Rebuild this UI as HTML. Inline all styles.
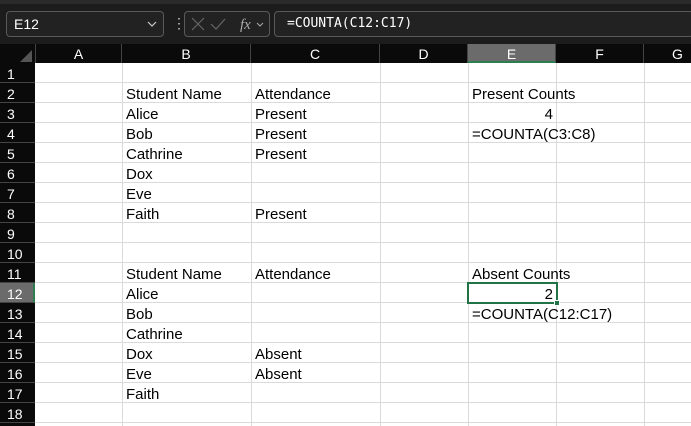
<!DOCTYPE html><html><head><style>
*{margin:0;padding:0;box-sizing:border-box}
body{width:691px;height:426px;overflow:hidden;background:#fff;font-family:"Liberation Sans",sans-serif;position:relative}
.a{position:absolute}
.t{position:absolute;font-size:15px;color:#000;line-height:20px;white-space:nowrap;margin-top:2px}
.ch{position:absolute;top:44px;height:19px;color:#fff;font-size:14px;text-align:center;line-height:21px;border-right:1px solid #444}
.rh{position:absolute;left:0;width:35px;height:20px;color:#fff;font-size:14px;line-height:22px;padding-left:7px;border-bottom:1px solid #444}
</style></head><body>
<div class="a" style="left:0;top:0;width:691px;height:44px;background:#1c1c1c"></div>
<div class="a" style="left:0;top:0;width:691px;height:4px;background:#2a2a2a"></div>
<div class="a" style="left:6px;top:11px;width:158px;height:26px;border:1px solid #5a5a5a;border-radius:4px;background:#222;color:#fff;font-size:14px;line-height:24px;padding-left:7px">E12</div>
<svg class="a" style="left:147px;top:20px" width="10" height="8"><path d="M1 2l4 4 4-4" stroke="#ccc" fill="none" stroke-width="1.2"/></svg>
<div class="a" style="left:172px;top:16px;color:#ccc;font-size:14px;line-height:14px">&#x22EE;</div>
<div class="a" style="left:184px;top:11px;width:86px;height:26px;border:1px solid #5a5a5a;border-radius:4px;background:#222"></div>
<svg class="a" style="left:188px;top:14px" width="80" height="20"><path d="M4 4l12 12M16 4L4 16" stroke="#666" stroke-width="1.2"/><path d="M23 10l5 5 9-10" stroke="#666" stroke-width="1.2" fill="none"/><text x="52" y="15" font-family="Liberation Serif" font-style="italic" font-size="15" fill="#aaa">fx</text><path d="M69 9l3 3 3-3" stroke="#aaa" fill="none"/></svg>
<div class="a" style="left:274px;top:11px;width:420px;height:26px;border:1px solid #5a5a5a;border-radius:4px;background:#222;color:#fff;font-family:'DejaVu Sans Mono','Liberation Mono',monospace;font-size:13px;line-height:24px;padding-left:12px">=COUNTA(C12:C17)</div>
<div class="a" style="left:0;top:44px;width:691px;height:19px;background:#0a0a0a"></div>
<div class="a" style="left:0;top:63px;width:35px;height:363px;background:#0a0a0a"></div>
<div class="a" style="left:20px;top:50px;width:0;height:0;border-left:12px solid transparent;border-bottom:12px solid #555"></div>
<div class="ch" style="left:35px;width:87px;border-left:1px solid #444">A</div>
<div class="ch" style="left:122px;width:129px">B</div>
<div class="ch" style="left:251px;width:129px">C</div>
<div class="ch" style="left:380px;width:88px">D</div>
<div class="ch" style="left:468px;width:88px;background:#6b6b6b;border-bottom:2px solid #2e7d4f">E</div>
<div class="ch" style="left:556px;width:88px">F</div>
<div class="ch" style="left:644px;width:60px;text-align:left;padding-left:28px">G</div>
<svg class="a" style="left:35px;top:63px" width="656" height="363">
<g stroke="#dadada" stroke-width="1">
<line x1="87.5" y1="0" x2="87.5" y2="363"/><line x1="216.5" y1="0" x2="216.5" y2="363"/><line x1="345.5" y1="0" x2="345.5" y2="363"/><line x1="433.5" y1="0" x2="433.5" y2="363"/><line x1="521.5" y1="0" x2="521.5" y2="363"/><line x1="609.5" y1="0" x2="609.5" y2="363"/>
<path d="M0 19.5H656M0 39.5H656M0 59.5H656M0 79.5H656M0 99.5H656M0 119.5H656M0 139.5H656M0 159.5H656M0 179.5H656M0 199.5H656M0 219.5H656M0 239.5H656M0 259.5H656M0 279.5H656M0 299.5H656M0 319.5H656M0 339.5H656M0 359.5H656"/>
</g></svg>
<div class="rh" style="top:63px">1</div><div class="rh" style="top:83px">2</div><div class="rh" style="top:103px">3</div><div class="rh" style="top:123px">4</div><div class="rh" style="top:143px">5</div><div class="rh" style="top:163px">6</div><div class="rh" style="top:183px">7</div><div class="rh" style="top:203px">8</div><div class="rh" style="top:223px">9</div><div class="rh" style="top:243px">10</div><div class="rh" style="top:263px">11</div><div class="rh" style="top:283px;background:#6b6b6b;border-right:2px solid #2e7d4f">12</div><div class="rh" style="top:303px">13</div><div class="rh" style="top:323px">14</div><div class="rh" style="top:343px">15</div><div class="rh" style="top:363px">16</div><div class="rh" style="top:383px">17</div><div class="rh" style="top:403px">18</div>
<div class="t" style="left:126px;top:83px">Student Name</div><div class="t" style="left:255px;top:83px">Attendance</div>
<div class="t" style="left:126px;top:103px">Alice</div><div class="t" style="left:255px;top:103px">Present</div>
<div class="t" style="left:126px;top:123px">Bob</div><div class="t" style="left:255px;top:123px">Present</div>
<div class="t" style="left:126px;top:143px">Cathrine</div><div class="t" style="left:255px;top:143px">Present</div>
<div class="t" style="left:126px;top:163px">Dox</div>
<div class="t" style="left:126px;top:183px">Eve</div>
<div class="t" style="left:126px;top:203px">Faith</div><div class="t" style="left:255px;top:203px">Present</div>
<div class="t" style="left:126px;top:263px">Student Name</div><div class="t" style="left:255px;top:263px">Attendance</div>
<div class="t" style="left:126px;top:283px">Alice</div>
<div class="t" style="left:126px;top:303px">Bob</div>
<div class="t" style="left:126px;top:323px">Cathrine</div>
<div class="t" style="left:126px;top:343px">Dox</div><div class="t" style="left:255px;top:343px">Absent</div>
<div class="t" style="left:126px;top:363px">Eve</div><div class="t" style="left:255px;top:363px">Absent</div>
<div class="t" style="left:126px;top:383px">Faith</div>
<div class="t" style="left:472px;top:83px">Present Counts</div>
<div class="t" style="left:468px;top:103px;width:85px;text-align:right">4</div>
<div class="t" style="left:472px;top:123px">=COUNTA(C3:C8)</div>
<div class="t" style="left:472px;top:263px">Absent Counts</div>
<div class="a" style="left:467px;top:282px;width:91px;height:22px;border:2px solid #217346"></div>
<div class="a" style="left:554px;top:300px;width:6px;height:6px;background:#217346;border:1px solid #fff"></div>
<div class="t" style="left:468px;top:283px;width:85px;text-align:right">2</div>
<div class="t" style="left:472px;top:303px">=COUNTA(C12:C17)</div>
</body></html>
